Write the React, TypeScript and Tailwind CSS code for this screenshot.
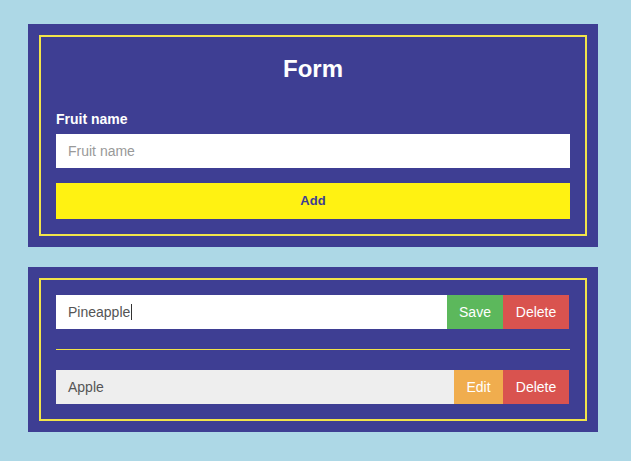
export default function App() {
  return (
    <div className="min-h-[461px] w-[631px] bg-[#add8e6] pt-[24px] pl-[28px] font-['Liberation_Sans',Arial,sans-serif]">
      <div className="w-[570px] bg-[#3e3e93] p-[11px]">
        <div className="border-2 border-[#f2e44a] px-[15px] pt-[17px] pb-[15px]">
          <h1 className="text-center text-[24px] leading-[29px] font-bold text-white">Form</h1>
          <div className="mt-[28px] text-[14px] leading-[17px] font-bold text-white">Fruit name</div>
          <div className="mt-[6px] flex h-[34px] items-center bg-white px-[12px] text-[14px] text-[#999]">Fruit name</div>
          <div className="mt-[15px] flex h-[36px] items-center justify-center bg-[#fff212] text-[13px] font-bold text-[#3e3e93]">Add</div>
        </div>
      </div>
      <div className="mt-[20px] w-[570px] bg-[#3e3e93] p-[11px]">
        <div className="border-2 border-[#f2e44a] px-[15px] py-[15px]">
          <div className="flex h-[34px] pr-[1px]">
            <div className="flex flex-1 items-center bg-white px-[12px] text-[14px] text-[#555]">
              Pineapple<span className="ml-[1px] inline-block h-[16px] w-[1px] bg-[#333]" />
            </div>
            <div className="flex w-[56px] items-center justify-center bg-[#5cb85c] text-[14px] text-white">Save</div>
            <div className="flex w-[66px] items-center justify-center bg-[#d9534f] text-[14px] text-white">Delete</div>
          </div>
          <div className="mt-[20px] h-[1px] bg-[#f2e44a]" />
          <div className="mt-[20px] flex h-[34px] pr-[1px]">
            <div className="flex flex-1 items-center bg-[#eeeeee] px-[12px] text-[14px] text-[#555]">Apple</div>
            <div className="flex w-[49px] items-center justify-center bg-[#f0ad4e] text-[14px] text-white">Edit</div>
            <div className="flex w-[66px] items-center justify-center bg-[#d9534f] text-[14px] text-white">Delete</div>
          </div>
        </div>
      </div>
    </div>
  );
}
